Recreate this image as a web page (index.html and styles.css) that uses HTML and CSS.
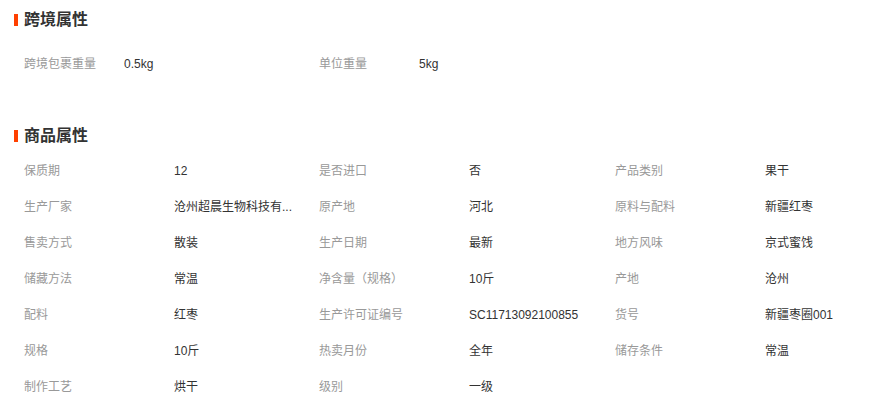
FILE: index.html
```html
<!DOCTYPE html>
<html lang="zh-CN">
<head>
<meta charset="utf-8">
<title>商品属性</title>
<link rel="stylesheet" href="styles.css">
</head>
<body>
<section class="block">
  <h3 class="title">跨境属性</h3>
  <div class="list cross">
    <div class="item"><span class="label">跨境包裹重量</span><span class="value">0.5kg</span></div>
    <div class="item"><span class="label">单位重量</span><span class="value">5kg</span></div>
  </div>
</section>
<section class="block goods">
  <h3 class="title">商品属性</h3>
  <div class="list grid">
    <div class="item"><span class="label">保质期</span><span class="value">12</span></div>
    <div class="item"><span class="label">是否进口</span><span class="value">否</span></div>
    <div class="item"><span class="label">产品类别</span><span class="value">果干</span></div>
    <div class="item"><span class="label">生产厂家</span><span class="value">沧州超晨生物科技有...</span></div>
    <div class="item"><span class="label">原产地</span><span class="value">河北</span></div>
    <div class="item"><span class="label">原料与配料</span><span class="value">新疆红枣</span></div>
    <div class="item"><span class="label">售卖方式</span><span class="value">散装</span></div>
    <div class="item"><span class="label">生产日期</span><span class="value">最新</span></div>
    <div class="item"><span class="label">地方风味</span><span class="value">京式蜜饯</span></div>
    <div class="item"><span class="label">储藏方法</span><span class="value">常温</span></div>
    <div class="item"><span class="label">净含量（规格）</span><span class="value">10斤</span></div>
    <div class="item"><span class="label">产地</span><span class="value">沧州</span></div>
    <div class="item"><span class="label">配料</span><span class="value">红枣</span></div>
    <div class="item"><span class="label">生产许可证编号</span><span class="value">SC11713092100855</span></div>
    <div class="item"><span class="label">货号</span><span class="value">新疆枣圈001</span></div>
    <div class="item"><span class="label">规格</span><span class="value">10斤</span></div>
    <div class="item"><span class="label">热卖月份</span><span class="value">全年</span></div>
    <div class="item"><span class="label">储存条件</span><span class="value">常温</span></div>
    <div class="item"><span class="label">制作工艺</span><span class="value">烘干</span></div>
    <div class="item"><span class="label">级别</span><span class="value">一级</span></div>
  </div>
</section>
</body>
</html>
```
FILE: styles.css
```css
html, body {
  margin: 0;
  padding: 0;
  background: #fff;
}
body {
  font-family: Tahoma, "Liberation Sans", Arial, "Noto Sans CJK SC", sans-serif;
  font-size: 12px;
  color: #333;
}
.block {
  padding-top: 10px;
}
.goods {
  padding-top: 44px;
}
.title {
  margin: 0;
  padding-left: 14px;
  display: flex;
  align-items: center;
  gap: 6px;
  height: 20px;
  line-height: 20px;
  font-size: 16px;
  font-weight: bold;
  color: #333;
}
.title::before {
  content: "";
  width: 4px;
  height: 12px;
  background: #ff4000;
}
.list {
  padding-left: 24px;
}
.cross {
  margin-top: 16px;
  display: flex;
}
.cross .item {
  width: 295px;
}
.cross .label {
  width: 100px;
}
.grid {
  margin-top: 7px;
  display: grid;
  grid-template-columns: 295px 296px 250px;
}
.item {
  display: flex;
  height: 36px;
  line-height: 36px;
  white-space: nowrap;
}
.label {
  width: 150px;
  flex: none;
  color: #999;
}
.value {
  width: 130px;
  color: #333;
}
```
